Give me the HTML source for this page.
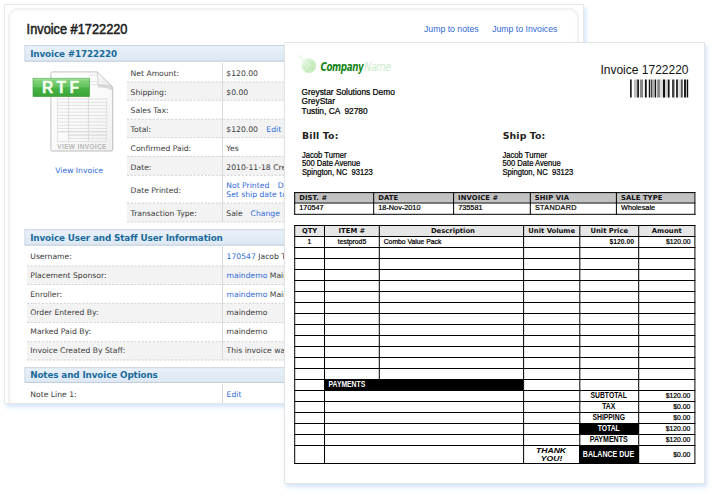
<!DOCTYPE html>
<html lang="en"><head><meta charset="utf-8"><title>Invoice #1722220</title>
<style>
html,body{margin:0;padding:0;background:#fff;}
body{width:715px;height:496px;position:relative;overflow:hidden;font-family:"Liberation Sans",sans-serif;}
.card{position:absolute;left:4px;top:4px;width:578px;height:398px;border:1px solid #e6e6e6;border-radius:1px;background:#fff;overflow:hidden;box-shadow:2px 3px 4px rgba(135,185,240,.36);}
.inner{position:absolute;left:3px;top:3px;width:569px;height:450px;border:1px solid #efefef;border-radius:9px;background:#fff;box-shadow:inset 0 0 3px 1px #f1f1f1;}
.lsvg{position:absolute;left:-1px;top:-1px;}
.page{position:absolute;left:284px;top:42px;width:419px;height:440px;border:1px solid #e4e4e4;border-radius:1px;background:#fff;overflow:hidden;box-shadow:2px 3px 4px rgba(135,185,240,.36);}
.psvg{position:absolute;left:0px;top:-1px;}
</style></head><body>
<div class="card"><div class="inner"></div>
<svg class="lsvg" width="580" height="399" viewBox="4 4 580 399"><defs><linearGradient id="hg" x1="0" y1="0" x2="0" y2="1"><stop offset="0" stop-color="#e9f1f9"/><stop offset="1" stop-color="#dde8f3"/></linearGradient></defs>
<g transform="translate(26.6,34.2) scale(0.9,1)"><text x="0" y="0" font-size="14.2" font-family='"Liberation Sans", sans-serif' fill="#222" stroke="#222" stroke-width="0.55">Invoice #1722220</text></g>
<text x="424" y="32.3" font-size="8.7" font-family='"Liberation Sans", sans-serif' fill="#2f6ad9" >Jump to notes</text>
<text x="492.2" y="32.3" font-size="8.7" font-family='"Liberation Sans", sans-serif' fill="#2f6ad9" >Jump to Invoices</text>
<rect x="24.5" y="45" width="560" height="16.700000000000003" fill="url(#hg)" />
<rect x="24.5" y="45" width="560" height="1" fill="#cdd5dd" />
<rect x="24.5" y="60.7" width="560" height="1" fill="#c2ccd7" />
<rect x="24.5" y="45" width="1" height="16.700000000000003" fill="#cdd7e1" />
<text x="30.2" y="56.6" font-size="8.8" font-family='"DejaVu Sans", "Liberation Sans", sans-serif' fill="#1a6b9b" font-weight="bold" letter-spacing="-0.12" >Invoice #1722220</text>
<rect x="127" y="82" width="460" height="18.299999999999997" fill="#f3f3f3" />
<rect x="127" y="119.2" width="460" height="18.39999999999999" fill="#f3f3f3" />
<rect x="127" y="156.4" width="460" height="18.900000000000006" fill="#f3f3f3" />
<rect x="127" y="203" width="460" height="19" fill="#f3f3f3" />
<line x1="127" y1="82" x2="584" y2="82" stroke="#d0d0d0" stroke-width="1" stroke-dasharray="2 1.7"/>
<line x1="127" y1="100.3" x2="584" y2="100.3" stroke="#d0d0d0" stroke-width="1" stroke-dasharray="2 1.7"/>
<line x1="127" y1="119.2" x2="584" y2="119.2" stroke="#d0d0d0" stroke-width="1" stroke-dasharray="2 1.7"/>
<line x1="127" y1="137.6" x2="584" y2="137.6" stroke="#d0d0d0" stroke-width="1" stroke-dasharray="2 1.7"/>
<line x1="127" y1="156.4" x2="584" y2="156.4" stroke="#d0d0d0" stroke-width="1" stroke-dasharray="2 1.7"/>
<line x1="127" y1="175.3" x2="584" y2="175.3" stroke="#d0d0d0" stroke-width="1" stroke-dasharray="2 1.7"/>
<line x1="127" y1="203" x2="584" y2="203" stroke="#d0d0d0" stroke-width="1" stroke-dasharray="2 1.7"/>
<line x1="127" y1="222" x2="584" y2="222" stroke="#d0d0d0" stroke-width="1" stroke-dasharray="2 1.7"/>
<rect x="222" y="63" width="1" height="159" fill="#dadada" />
<text x="130.6" y="75.6" font-size="7.65" font-family='"DejaVu Sans", "Liberation Sans", sans-serif' fill="#3a3a3a" >Net Amount:</text>
<text x="130.6" y="94.5" font-size="7.65" font-family='"DejaVu Sans", "Liberation Sans", sans-serif' fill="#3a3a3a" >Shipping:</text>
<text x="130.6" y="113.4" font-size="7.65" font-family='"DejaVu Sans", "Liberation Sans", sans-serif' fill="#3a3a3a" >Sales Tax:</text>
<text x="130.6" y="132" font-size="7.65" font-family='"DejaVu Sans", "Liberation Sans", sans-serif' fill="#3a3a3a" >Total:</text>
<text x="130.6" y="150.6" font-size="7.65" font-family='"DejaVu Sans", "Liberation Sans", sans-serif' fill="#3a3a3a" >Confirmed Paid:</text>
<text x="130.6" y="169.5" font-size="7.65" font-family='"DejaVu Sans", "Liberation Sans", sans-serif' fill="#3a3a3a" >Date:</text>
<text x="130.6" y="193" font-size="7.65" font-family='"DejaVu Sans", "Liberation Sans", sans-serif' fill="#3a3a3a" >Date Printed:</text>
<text x="130.6" y="215.6" font-size="7.65" font-family='"DejaVu Sans", "Liberation Sans", sans-serif' fill="#3a3a3a" >Transaction Type:</text>
<text x="226.3" y="75.6" font-size="7.65" font-family='"DejaVu Sans", "Liberation Sans", sans-serif' fill="#3a3a3a" >$120.00</text>
<text x="226.3" y="94.5" font-size="7.65" font-family='"DejaVu Sans", "Liberation Sans", sans-serif' fill="#3a3a3a" >$0.00</text>
<text x="226.3" y="132" font-size="7.65" font-family='"DejaVu Sans", "Liberation Sans", sans-serif' fill="#3a3a3a" >$120.00 <tspan dx="6" fill="#2f6ad9">Edit</tspan></text>
<text x="226.3" y="150.6" font-size="7.65" font-family='"DejaVu Sans", "Liberation Sans", sans-serif' fill="#3a3a3a" >Yes</text>
<text x="226.3" y="169.5" font-size="7.65" font-family='"DejaVu Sans", "Liberation Sans", sans-serif' fill="#3a3a3a" >2010-11-18 Created</text>
<text x="226.3" y="188" font-size="7.65" font-family='"DejaVu Sans", "Liberation Sans", sans-serif' fill="#2f6ad9" >Not Printed <tspan dx="6">Date</tspan></text>
<text x="226.3" y="196.8" font-size="7.65" font-family='"DejaVu Sans", "Liberation Sans", sans-serif' fill="#2f6ad9" >Set ship date today</text>
<text x="226.3" y="215.6" font-size="7.65" font-family='"DejaVu Sans", "Liberation Sans", sans-serif' fill="#3a3a3a" >Sale <tspan dx="5.5" fill="#2f6ad9">Change</tspan></text>
<rect x="24.5" y="229.3" width="560" height="16.299999999999983" fill="url(#hg)" />
<rect x="24.5" y="229.3" width="560" height="1" fill="#cdd5dd" />
<rect x="24.5" y="244.6" width="560" height="1" fill="#c2ccd7" />
<rect x="24.5" y="229.3" width="1" height="16.299999999999983" fill="#cdd7e1" />
<text x="30.2" y="240.8" font-size="8.8" font-family='"DejaVu Sans", "Liberation Sans", sans-serif' fill="#1a6b9b" font-weight="bold" letter-spacing="-0.12" >Invoice User and Staff User Information</text>
<rect x="27" y="266" width="560" height="18.600000000000023" fill="#f3f3f3" />
<rect x="27" y="303.3" width="560" height="19.30000000000001" fill="#f3f3f3" />
<rect x="27" y="341.7" width="560" height="18.30000000000001" fill="#f3f3f3" />
<line x1="27" y1="266" x2="584" y2="266" stroke="#d0d0d0" stroke-width="1" stroke-dasharray="2 1.7"/>
<line x1="27" y1="284.6" x2="584" y2="284.6" stroke="#d0d0d0" stroke-width="1" stroke-dasharray="2 1.7"/>
<line x1="27" y1="303.3" x2="584" y2="303.3" stroke="#d0d0d0" stroke-width="1" stroke-dasharray="2 1.7"/>
<line x1="27" y1="322.6" x2="584" y2="322.6" stroke="#d0d0d0" stroke-width="1" stroke-dasharray="2 1.7"/>
<line x1="27" y1="341.7" x2="584" y2="341.7" stroke="#d0d0d0" stroke-width="1" stroke-dasharray="2 1.7"/>
<line x1="27" y1="360" x2="584" y2="360" stroke="#d0d0d0" stroke-width="1" stroke-dasharray="2 1.7"/>
<rect x="222" y="247" width="1" height="113" fill="#dadada" />
<text x="30.3" y="259" font-size="7.65" font-family='"DejaVu Sans", "Liberation Sans", sans-serif' fill="#3a3a3a" >Username:</text>
<text x="30.3" y="277.5" font-size="7.65" font-family='"DejaVu Sans", "Liberation Sans", sans-serif' fill="#3a3a3a" >Placement Sponsor:</text>
<text x="30.3" y="296.7" font-size="7.65" font-family='"DejaVu Sans", "Liberation Sans", sans-serif' fill="#3a3a3a" >Enroller:</text>
<text x="30.3" y="315.2" font-size="7.65" font-family='"DejaVu Sans", "Liberation Sans", sans-serif' fill="#3a3a3a" >Order Entered By:</text>
<text x="30.3" y="334" font-size="7.65" font-family='"DejaVu Sans", "Liberation Sans", sans-serif' fill="#3a3a3a" >Marked Paid By:</text>
<text x="30.3" y="352.5" font-size="7.65" font-family='"DejaVu Sans", "Liberation Sans", sans-serif' fill="#3a3a3a" >Invoice Created By Staff:</text>
<text x="226.6" y="259" font-size="7.65" font-family='"DejaVu Sans", "Liberation Sans", sans-serif' fill="#3a3a3a" ><tspan fill="#2f6ad9">170547</tspan> Jacob Turner</text>
<text x="226.6" y="277.5" font-size="7.65" font-family='"DejaVu Sans", "Liberation Sans", sans-serif' fill="#3a3a3a" ><tspan fill="#2f6ad9">maindemo</tspan> Main Demo</text>
<text x="226.6" y="296.7" font-size="7.65" font-family='"DejaVu Sans", "Liberation Sans", sans-serif' fill="#3a3a3a" ><tspan fill="#2f6ad9">maindemo</tspan> Main Demo</text>
<text x="226.6" y="315.2" font-size="7.65" font-family='"DejaVu Sans", "Liberation Sans", sans-serif' fill="#3a3a3a" >maindemo</text>
<text x="226.6" y="334" font-size="7.65" font-family='"DejaVu Sans", "Liberation Sans", sans-serif' fill="#3a3a3a" >maindemo</text>
<text x="226.6" y="352.5" font-size="7.65" font-family='"DejaVu Sans", "Liberation Sans", sans-serif' fill="#3a3a3a" >This invoice was created by staff</text>
<rect x="24.5" y="367.2" width="560" height="15.699999999999989" fill="url(#hg)" />
<rect x="24.5" y="367.2" width="560" height="1" fill="#cdd5dd" />
<rect x="24.5" y="381.9" width="560" height="1" fill="#c2ccd7" />
<rect x="24.5" y="367.2" width="1" height="15.699999999999989" fill="#cdd7e1" />
<text x="30.2" y="378.2" font-size="8.8" font-family='"DejaVu Sans", "Liberation Sans", sans-serif' fill="#1a6b9b" font-weight="bold" letter-spacing="-0.12" >Notes and Invoice Options</text>
<rect x="222" y="384" width="1" height="22" fill="#dadada" />
<text x="30.3" y="396.8" font-size="7.65" font-family='"DejaVu Sans", "Liberation Sans", sans-serif' fill="#3a3a3a" >Note Line 1:</text>
<text x="226.6" y="396.8" font-size="7.65" font-family='"DejaVu Sans", "Liberation Sans", sans-serif' fill="#2f6ad9" >Edit</text>

<defs>
<linearGradient id="pg" x1="0" y1="0" x2="1" y2="1"><stop offset="0" stop-color="#ffffff"/><stop offset="0.6" stop-color="#f9f9f9"/><stop offset="1" stop-color="#efefef"/></linearGradient>
<linearGradient id="fl" x1="0" y1="0" x2="1" y2="1"><stop offset="0" stop-color="#ffffff"/><stop offset="1" stop-color="#e4e4e4"/></linearGradient>
<linearGradient id="gr" x1="0" y1="0" x2="0" y2="1"><stop offset="0" stop-color="#8ed888"/><stop offset="0.48" stop-color="#62c25c"/><stop offset="0.52" stop-color="#4ab445"/><stop offset="1" stop-color="#3aa337"/></linearGradient>
</defs>
<path d="M52.3 72.6 H97.2 L113.4 88 V150.2 Q113.4 151.8 111.9 151.8 H52.3 Q50.8 151.8 50.8 150.2 V74.1 Q50.8 72.6 52.3 72.6Z" fill="#e6e6e6" opacity="0.7"/>
<path d="M52.2 71.9 H97 L112.6 87 V149.6 Q112.6 150.9 111.2 150.9 H52.2 Q50.9 150.9 50.9 149.6 V73.2 Q50.9 71.9 52.2 71.9Z" fill="url(#pg)" stroke="#bcbcbc" stroke-width="0.9"/>
<path d="M97.9 85 Q104.5 84.2 112.6 87 L112.6 90.6 Q105 86.8 97.6 87.6Z" fill="#cfcfcf" opacity="0.75"/>
<path d="M97 71.9 Q98.8 79.5 97.9 85 Q104.5 84.2 112.6 87 Z" fill="url(#fl)" stroke="#c2c2c2" stroke-width="0.7"/>

<rect x="57" y="98.6" width="50" height="0.8" fill="#dcdcdc" />
<rect x="57" y="101.88" width="50" height="0.8" fill="#dcdcdc" />
<rect x="57" y="105.16" width="50" height="0.8" fill="#dcdcdc" />
<rect x="57" y="108.44" width="50" height="0.8" fill="#dcdcdc" />
<rect x="57" y="111.72" width="50" height="0.8" fill="#dcdcdc" />
<rect x="57" y="115.0" width="50" height="0.8" fill="#dcdcdc" />
<rect x="57" y="118.28" width="50" height="0.8" fill="#dcdcdc" />
<rect x="57" y="121.56" width="50" height="0.8" fill="#dcdcdc" />
<rect x="57" y="124.84" width="50" height="0.8" fill="#dcdcdc" />
<rect x="57" y="128.12" width="50" height="0.8" fill="#dcdcdc" />
<rect x="57" y="131.4" width="50" height="0.8" fill="#c9c9c9" />
<rect x="68.3" y="134.68" width="38.7" height="0.8" fill="#c9c9c9" />
<rect x="68.3" y="137.96" width="38.7" height="0.8" fill="#dcdcdc" />
<rect x="57" y="141.24" width="50" height="0.8" fill="#dcdcdc" />
<rect x="89.7" y="74.6" width="7.5" height="0.8" fill="#dedede" />
<rect x="89.7" y="81.2" width="8" height="0.8" fill="#dedede" />
<rect x="89.7" y="84.4" width="8" height="0.8" fill="#dedede" />
<rect x="57" y="98.6" width="0.8" height="43" fill="#dcdcdc" />
<rect x="68.3" y="96.6" width="0.8" height="45" fill="#d4d4d4" />
<rect x="87.9" y="96.6" width="0.8" height="45" fill="#d4d4d4" />
<rect x="106.4" y="98.6" width="0.8" height="43" fill="#dcdcdc" />
<rect x="33" y="78.2" width="56.6" height="18.4" fill="url(#gr)" stroke="#3c9c39" stroke-width="0.6"/>
<rect x="33.4" y="78.6" width="55.8" height="0.8" fill="#a9e4a4" />
<text x="41.9" y="93.3" font-size="15.6" font-family='"Liberation Sans", sans-serif' fill="#f4fff2" font-weight="bold" letter-spacing="3.4" stroke="#f4fff2" stroke-width="0.3">RTF</text>
<text x="82" y="148.8" font-size="6.5" font-family='"Liberation Sans", sans-serif' fill="#b6b6b6" font-weight="bold" text-anchor="middle" letter-spacing="0.35" >VIEW INVOICE</text>
<text x="55.3" y="173" font-size="7.65" font-family='"DejaVu Sans", "Liberation Sans", sans-serif' fill="#2f6ad9" >View Invoice</text></svg>
</div>
<div class="page">
<svg class="psvg" width="420" height="442" viewBox="285 42 420 442"><defs><radialGradient id="lg" cx="0.7" cy="0.65" r="0.8"><stop offset="0" stop-color="#c4e9bb"/><stop offset="0.55" stop-color="#cdeec6"/><stop offset="1" stop-color="#e9f8e5"/></radialGradient></defs>
<circle cx="308.8" cy="65.7" r="7.4" fill="url(#lg)"/>
<path d="M298.3 54.8 L306.5 63.5 M299.8 55.6 L308 63.2 M298.6 56.6 L305 64.5" stroke="#e4f5df" stroke-width="0.8" fill="none"/>
<path d="M302.5 59.5 L310 67 M304 59.3 L311.5 66 M301.8 61.5 L308 68.5" stroke="#f4fbf2" stroke-width="0.8" fill="none"/>
<g transform="translate(320.4,70.9) scale(0.8,1)"><text x="0" y="0" font-size="12.2" font-family='"DejaVu Sans Condensed", "DejaVu Sans", sans-serif' fill="#16861a" font-weight="bold" font-style="italic" letter-spacing="-0.5" >Company</text></g>
<g transform="translate(364.2,70.9) scale(0.87,1)"><text x="0" y="0" font-size="12.2" font-family='"DejaVu Sans Condensed", "DejaVu Sans", sans-serif' fill="#cdebc9" font-style="italic" letter-spacing="-0.5" >Name</text></g>
<text x="301.6" y="94.8" font-size="8.35" font-family='"Liberation Sans", sans-serif' fill="#000" stroke="#000" stroke-width="0.22">Greystar Solutions Demo</text>
<text x="301.6" y="104.4" font-size="8.35" font-family='"Liberation Sans", sans-serif' fill="#000" stroke="#000" stroke-width="0.22">GreyStar</text>
<text x="301.6" y="113.7" font-size="8.35" font-family='"Liberation Sans", sans-serif' fill="#000" xml:space="preserve" stroke="#000" stroke-width="0.22">Tustin, CA  92780</text>
<text x="688.5" y="73.6" font-size="12" font-family='"Liberation Sans", sans-serif' fill="#111" text-anchor="end" >Invoice 1722220</text>
<rect x="630.09" y="79.5" width="1.57" height="18" fill="#111" />
<rect x="634.01" y="79.5" width="3.23" height="18" fill="#bdbdbd" />
<rect x="637.24" y="79.5" width="1.67" height="18" fill="#111" />
<rect x="639.89" y="79.5" width="3.23" height="18" fill="#8a8a8a" />
<rect x="644.88" y="79.5" width="1.86" height="18" fill="#111" />
<rect x="648.8" y="79.5" width="1.18" height="18" fill="#111" />
<rect x="650.66" y="79.5" width="1.27" height="18" fill="#333" />
<rect x="651.93" y="79.5" width="2.94" height="18" fill="#aaa" />
<rect x="654.87" y="79.5" width="1.27" height="18" fill="#111" />
<rect x="657.13" y="79.5" width="3.13" height="18" fill="#8a8a8a" />
<rect x="660.26" y="79.5" width="2.74" height="18" fill="#dcdcdc" />
<rect x="663.0" y="79.5" width="2.15" height="18" fill="#111" />
<rect x="665.16" y="79.5" width="2.74" height="18" fill="#cfcfcf" />
<rect x="667.9" y="79.5" width="1.67" height="18" fill="#111" />
<rect x="672.01" y="79.5" width="2.45" height="18" fill="#444" />
<rect x="676.13" y="79.5" width="1.76" height="18" fill="#111" />
<rect x="677.89" y="79.5" width="2.94" height="18" fill="#dedede" />
<rect x="680.83" y="79.5" width="1.96" height="18" fill="#555" />
<rect x="684.06" y="79.5" width="1.86" height="18" fill="#111" />
<rect x="686.7" y="79.5" width="1.47" height="18" fill="#111" />
<text x="302" y="139" font-size="9.4" font-family='"DejaVu Sans", "Liberation Sans", sans-serif' fill="#222" font-weight="bold" letter-spacing="0.15" >Bill To:</text>
<text x="502.7" y="139" font-size="9.4" font-family='"DejaVu Sans", "Liberation Sans", sans-serif' fill="#222" font-weight="bold" letter-spacing="0.1" >Ship To:</text>
<g transform="translate(302,157.8) scale(0.93,1)"><text x="0" y="0" font-size="8.2" font-family='"Liberation Sans", sans-serif' fill="#000" stroke="#000" stroke-width="0.22">Jacob Turner</text></g>
<g transform="translate(302,165.9) scale(0.93,1)"><text x="0" y="0" font-size="8.2" font-family='"Liberation Sans", sans-serif' fill="#000" stroke="#000" stroke-width="0.22">500 Date Avenue</text></g>
<g transform="translate(302,174.6) scale(0.93,1)"><text x="0" y="0" font-size="8.2" font-family='"Liberation Sans", sans-serif' fill="#000" xml:space="preserve" stroke="#000" stroke-width="0.22">Spington, NC  93123</text></g>
<g transform="translate(502.5,157.8) scale(0.93,1)"><text x="0" y="0" font-size="8.2" font-family='"Liberation Sans", sans-serif' fill="#000" stroke="#000" stroke-width="0.22">Jacob Turner</text></g>
<g transform="translate(502.5,165.9) scale(0.93,1)"><text x="0" y="0" font-size="8.2" font-family='"Liberation Sans", sans-serif' fill="#000" stroke="#000" stroke-width="0.22">500 Date Avenue</text></g>
<g transform="translate(502.5,174.6) scale(0.93,1)"><text x="0" y="0" font-size="8.2" font-family='"Liberation Sans", sans-serif' fill="#000" xml:space="preserve" stroke="#000" stroke-width="0.22">Spington, NC  93123</text></g>
<rect x="294.2" y="192.1" width="400.2" height="10.400000000000006" fill="#c2c2c2" />
<rect x="294.2" y="192.1" width="401.2" height="1" fill="#000" />
<rect x="294.2" y="202.5" width="401.2" height="1" fill="#000" />
<rect x="294.2" y="213.8" width="401.2" height="1" fill="#000" />
<rect x="294.2" y="192.1" width="1" height="22.700000000000017" fill="#000" />
<rect x="373.2" y="192.1" width="1" height="22.700000000000017" fill="#000" />
<rect x="453.1" y="192.1" width="1" height="22.700000000000017" fill="#000" />
<rect x="529.8" y="192.1" width="1" height="22.700000000000017" fill="#000" />
<rect x="615.9" y="192.1" width="1" height="22.700000000000017" fill="#000" />
<rect x="694.4" y="192.1" width="1" height="22.700000000000017" fill="#000" />
<text x="299.2" y="199.8" font-size="6.8" font-family='"DejaVu Sans", "Liberation Sans", sans-serif' fill="#111" font-weight="bold" letter-spacing="0.1" >DIST. #</text>
<text x="299.3" y="210.4" font-size="7.3" font-family='"Liberation Sans", sans-serif' fill="#000" stroke="#000" stroke-width="0.22">170547</text>
<text x="378.2" y="199.8" font-size="6.8" font-family='"DejaVu Sans", "Liberation Sans", sans-serif' fill="#111" font-weight="bold" letter-spacing="0.1" >DATE</text>
<text x="378.3" y="210.4" font-size="7.3" font-family='"Liberation Sans", sans-serif' fill="#000" stroke="#000" stroke-width="0.22">18-Nov-2010</text>
<text x="458.1" y="199.8" font-size="6.8" font-family='"DejaVu Sans", "Liberation Sans", sans-serif' fill="#111" font-weight="bold" letter-spacing="0.1" >INVOICE #</text>
<text x="458.20000000000005" y="210.4" font-size="7.3" font-family='"Liberation Sans", sans-serif' fill="#000" stroke="#000" stroke-width="0.22">735581</text>
<text x="534.8" y="199.8" font-size="6.8" font-family='"DejaVu Sans", "Liberation Sans", sans-serif' fill="#111" font-weight="bold" letter-spacing="0.1" >SHIP VIA</text>
<text x="534.9" y="210.4" font-size="7.3" font-family='"Liberation Sans", sans-serif' fill="#000" letter-spacing="0.3" stroke="#000" stroke-width="0.22">STANDARD</text>
<text x="620.9" y="199.8" font-size="6.8" font-family='"DejaVu Sans", "Liberation Sans", sans-serif' fill="#111" font-weight="bold" letter-spacing="0.1" >SALE TYPE</text>
<text x="621.0" y="210.4" font-size="7.3" font-family='"Liberation Sans", sans-serif' fill="#000" stroke="#000" stroke-width="0.22">Wholesale</text>
<rect x="294.2" y="225" width="400.2" height="11" fill="#e6e6e6" />
<rect x="294.2" y="225" width="401.2" height="1" fill="#000" />
<rect x="294.2" y="236" width="401.2" height="1" fill="#000" />
<rect x="294.2" y="247" width="401.2" height="1" fill="#000" />
<rect x="294.2" y="258" width="401.2" height="1" fill="#000" />
<rect x="294.2" y="269" width="401.2" height="1" fill="#000" />
<rect x="294.2" y="280" width="401.2" height="1" fill="#000" />
<rect x="294.2" y="291" width="401.2" height="1" fill="#000" />
<rect x="294.2" y="302" width="401.2" height="1" fill="#000" />
<rect x="294.2" y="313" width="401.2" height="1" fill="#000" />
<rect x="294.2" y="324" width="401.2" height="1" fill="#000" />
<rect x="294.2" y="335" width="401.2" height="1" fill="#000" />
<rect x="294.2" y="346" width="401.2" height="1" fill="#000" />
<rect x="294.2" y="357" width="401.2" height="1" fill="#000" />
<rect x="294.2" y="368" width="401.2" height="1" fill="#000" />
<rect x="294.2" y="379" width="401.2" height="1" fill="#000" />
<rect x="294.2" y="390" width="401.2" height="1" fill="#000" />
<rect x="294.2" y="401" width="401.2" height="1" fill="#000" />
<rect x="294.2" y="412" width="401.2" height="1" fill="#000" />
<rect x="294.2" y="423" width="401.2" height="1" fill="#000" />
<rect x="294.2" y="434" width="401.2" height="1" fill="#000" />
<rect x="294.2" y="445" width="401.2" height="1" fill="#000" />
<rect x="294.2" y="463" width="401.2" height="1" fill="#000" />
<rect x="294.2" y="225.3" width="1" height="238.7" fill="#000" />
<rect x="694.4" y="225.3" width="1" height="238.7" fill="#000" />
<rect x="324" y="225.3" width="1" height="238.7" fill="#000" />
<rect x="378.8" y="225.3" width="1" height="153.7" fill="#000" />
<rect x="523.1" y="225.3" width="1" height="238.7" fill="#000" />
<rect x="579.3" y="225.3" width="1" height="238.7" fill="#000" />
<rect x="638.2" y="225.3" width="1" height="238.7" fill="#000" />
<text x="309.6" y="233.2" font-size="6.8" font-family='"DejaVu Sans", "Liberation Sans", sans-serif' fill="#111" font-weight="bold" text-anchor="middle" >QTY</text>
<text x="351.9" y="233.2" font-size="6.8" font-family='"DejaVu Sans", "Liberation Sans", sans-serif' fill="#111" font-weight="bold" text-anchor="middle" >ITEM #</text>
<text x="452.95000000000005" y="233.2" font-size="6.8" font-family='"DejaVu Sans", "Liberation Sans", sans-serif' fill="#111" font-weight="bold" text-anchor="middle" >Description</text>
<text x="551.7" y="233.2" font-size="6.8" font-family='"DejaVu Sans", "Liberation Sans", sans-serif' fill="#111" font-weight="bold" text-anchor="middle" >Unit Volume</text>
<text x="609.25" y="233.2" font-size="6.8" font-family='"DejaVu Sans", "Liberation Sans", sans-serif' fill="#111" font-weight="bold" text-anchor="middle" >Unit Price</text>
<text x="666.8" y="233.2" font-size="6.8" font-family='"DejaVu Sans", "Liberation Sans", sans-serif' fill="#111" font-weight="bold" text-anchor="middle" >Amount</text>
<text x="309.5" y="244.3" font-size="6.8" font-family='"Liberation Sans", sans-serif' fill="#000" text-anchor="middle" stroke="#000" stroke-width="0.22">1</text>
<text x="352" y="244.3" font-size="6.8" font-family='"Liberation Sans", sans-serif' fill="#000" text-anchor="middle" stroke="#000" stroke-width="0.22">testprod5</text>
<text x="383.7" y="244.3" font-size="6.8" font-family='"Liberation Sans", sans-serif' fill="#000" stroke="#000" stroke-width="0.22">Combo Value Pack</text>
<text x="634" y="244.3" font-size="6.8" font-family='"Liberation Sans", sans-serif' fill="#000" font-weight="bold" text-anchor="end" >$120.00</text>
<text x="690.5" y="244.3" font-size="6.8" font-family='"Liberation Sans", sans-serif' fill="#000" text-anchor="end" stroke="#000" stroke-width="0.22">$120.00</text>
<rect x="324" y="379" width="199" height="12" fill="#000" />
<g transform="translate(328.6,387.2) scale(0.81,1)"><text x="0" y="0" font-size="8.4" font-family='"Liberation Sans", sans-serif' fill="#fff" font-weight="bold" >PAYMENTS</text></g>
<g transform="translate(608.7,398.1) scale(0.81,1)"><text x="0" y="0" font-size="8.4" font-family='"Liberation Sans", sans-serif' fill="#000" font-weight="bold" text-anchor="middle" >SUBTOTAL</text></g>
<text x="690.3" y="398.1" font-size="6.8" font-family='"Liberation Sans", sans-serif' fill="#000" text-anchor="end" stroke="#000" stroke-width="0.22">$120.00</text>
<g transform="translate(608.7,409.1) scale(0.81,1)"><text x="0" y="0" font-size="8.4" font-family='"Liberation Sans", sans-serif' fill="#000" font-weight="bold" text-anchor="middle" >TAX</text></g>
<text x="690.3" y="409.1" font-size="6.8" font-family='"Liberation Sans", sans-serif' fill="#000" text-anchor="end" stroke="#000" stroke-width="0.22">$0.00</text>
<g transform="translate(608.7,420.1) scale(0.81,1)"><text x="0" y="0" font-size="8.4" font-family='"Liberation Sans", sans-serif' fill="#000" font-weight="bold" text-anchor="middle" >SHIPPING</text></g>
<text x="690.3" y="420.1" font-size="6.8" font-family='"Liberation Sans", sans-serif' fill="#000" text-anchor="end" stroke="#000" stroke-width="0.22">$0.00</text>
<rect x="579" y="423" width="60" height="12" fill="#000" />
<g transform="translate(608.7,431.1) scale(0.81,1)"><text x="0" y="0" font-size="8.4" font-family='"Liberation Sans", sans-serif' fill="#fff" font-weight="bold" text-anchor="middle" >TOTAL</text></g>
<text x="690.3" y="431.1" font-size="6.8" font-family='"Liberation Sans", sans-serif' fill="#000" text-anchor="end" stroke="#000" stroke-width="0.22">$120.00</text>
<g transform="translate(608.7,442.1) scale(0.84,1)"><text x="0" y="0" font-size="8.4" font-family='"Liberation Sans", sans-serif' fill="#000" font-weight="bold" text-anchor="middle" >PAYMENTS</text></g>
<text x="690.3" y="442.1" font-size="6.8" font-family='"Liberation Sans", sans-serif' fill="#000" text-anchor="end" stroke="#000" stroke-width="0.22">$120.00</text>
<rect x="579" y="445" width="60" height="19" fill="#000" />
<g transform="translate(608.5,457) scale(0.84,1)"><text x="0" y="0" font-size="8.4" font-family='"Liberation Sans", sans-serif' fill="#fff" font-weight="bold" text-anchor="middle" >BALANCE DUE</text></g>
<text x="690.3" y="457" font-size="6.8" font-family='"Liberation Sans", sans-serif' fill="#000" text-anchor="end" stroke="#000" stroke-width="0.22">$0.00</text>
<g transform="translate(551,452.7) scale(1.15,1)"><text x="0" y="0" font-size="7.5" font-family='"Liberation Sans", sans-serif' fill="#000" font-weight="bold" font-style="italic" text-anchor="middle" >THANK</text></g>
<g transform="translate(551.5,460.5) scale(1.15,1)"><text x="0" y="0" font-size="7.5" font-family='"Liberation Sans", sans-serif' fill="#000" font-weight="bold" font-style="italic" text-anchor="middle" >YOU!</text></g></svg>
</div>
</body></html>
